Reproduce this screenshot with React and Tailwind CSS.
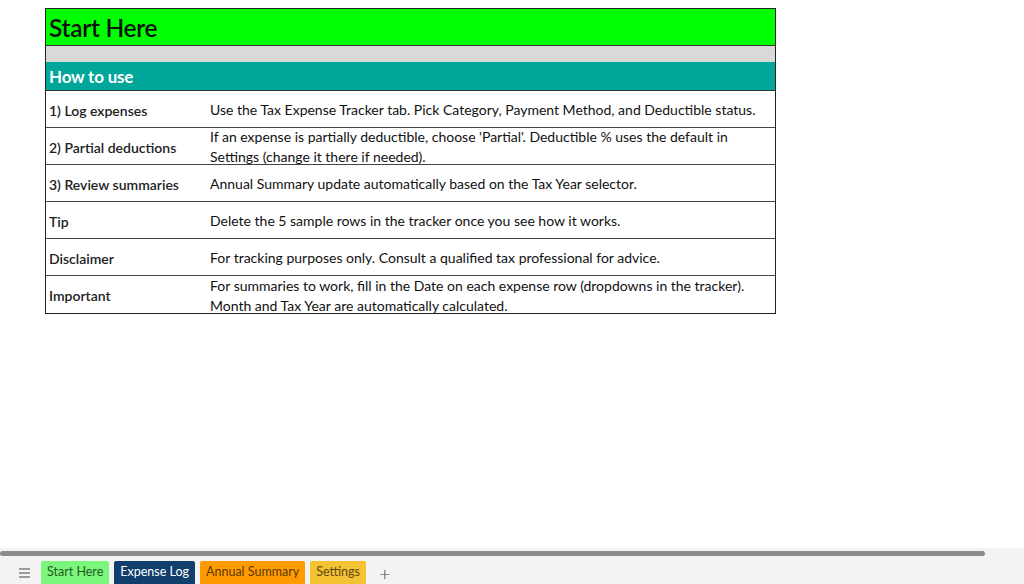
const rows = [
  { label: "1) Log expenses", text: ["Use the Tax Expense Tracker tab. Pick Category, Payment Method, and Deductible status."] },
  { label: "2) Partial deductions", text: ["If an expense is partially deductible, choose 'Partial'. Deductible % uses the default in", "Settings (change it there if needed)."] },
  { label: "3) Review summaries", text: ["Annual Summary update automatically based on the Tax Year selector."] },
  { label: "Tip", text: ["Delete the 5 sample rows in the tracker once you see how it works."] },
  { label: "Disclaimer", text: ["For tracking purposes only. Consult a qualified tax professional for advice."] },
  { label: "Important", text: ["For summaries to work, fill in the Date on each expense row (dropdowns in the tracker).", "Month and Tax Year are automatically calculated."] },
];

const tabs = [
  { name: "Start Here", cls: "bg-[#7cf57c] text-[#1d5c1d]" },
  { name: "Expense Log", cls: "bg-[#103f6e] text-white" },
  { name: "Annual Summary", cls: "bg-[#ff9a00] text-[#5a3a00]" },
  { name: "Settings", cls: "bg-[#f4c232] text-[#5a4a10]" },
];

export default function App() {
  return (
    <div className="w-[1024px] h-[584px] bg-white flex flex-col font-['Lato',sans-serif] text-[#111]">
      <div className="flex-1 pt-2 pl-[45px]">
        <div className="w-[731px] border border-[#222]">
          <div className="h-[37px] bg-[#00ff00] border-b border-[#333] flex items-center pl-[3px] pt-[2px] text-[24.5px] font-semibold tracking-[-0.3px]">
            Start Here
          </div>
          <div className="h-[16px] bg-[#d9d9d9]"></div>
          <div className="h-[29px] bg-[#00a69a] border-b border-[#333] flex items-center pl-[3px] pt-[1px] text-[17px] font-bold text-white tracking-[-0.2px]">
            How to use
          </div>
          {rows.map((r, i) => (
            <div
              key={r.label}
              className={`h-[37px] flex items-center pt-[2px] ${i < rows.length - 1 ? "border-b border-[#444]" : ""}`}
            >
              <div className="w-[164px] pl-[3px] text-[14px] font-semibold text-[#222]">{r.label}</div>
              <div className="flex-1 text-[14px] leading-[20px] text-[#111]">
                {r.text.map((t) => (
                  <div key={t}>{t}</div>
                ))}
              </div>
            </div>
          ))}
        </div>
      </div>
      <div className="h-[36px] bg-[#f3f3f3] flex flex-col">
        <div className="h-[9px] pt-[3px]">
          <div className="w-[985px] h-[5px] rounded-full bg-[#8c8c8c]"></div>
        </div>
        <div className="flex items-end flex-1 text-[12.5px]">
          <div className="w-[41px] pl-[19px] flex items-center h-[23px]">
            <svg width="11" height="10" viewBox="0 0 11 10">
              <path d="M0 1h11M0 5h11M0 9h11" stroke="#444" strokeWidth="1.2" />
            </svg>
          </div>
          <div className="flex gap-[5px] h-[23px]">
            {tabs.map((t) => (
              <div key={t.name} className={`px-[6px] rounded-t-[2px] flex items-center ${t.cls}`}>
                {t.name}
              </div>
            ))}
            <div className="pl-[8px] flex items-center text-[20px] text-[#444] font-light">+</div>
          </div>
        </div>
      </div>
    </div>
  );
}
